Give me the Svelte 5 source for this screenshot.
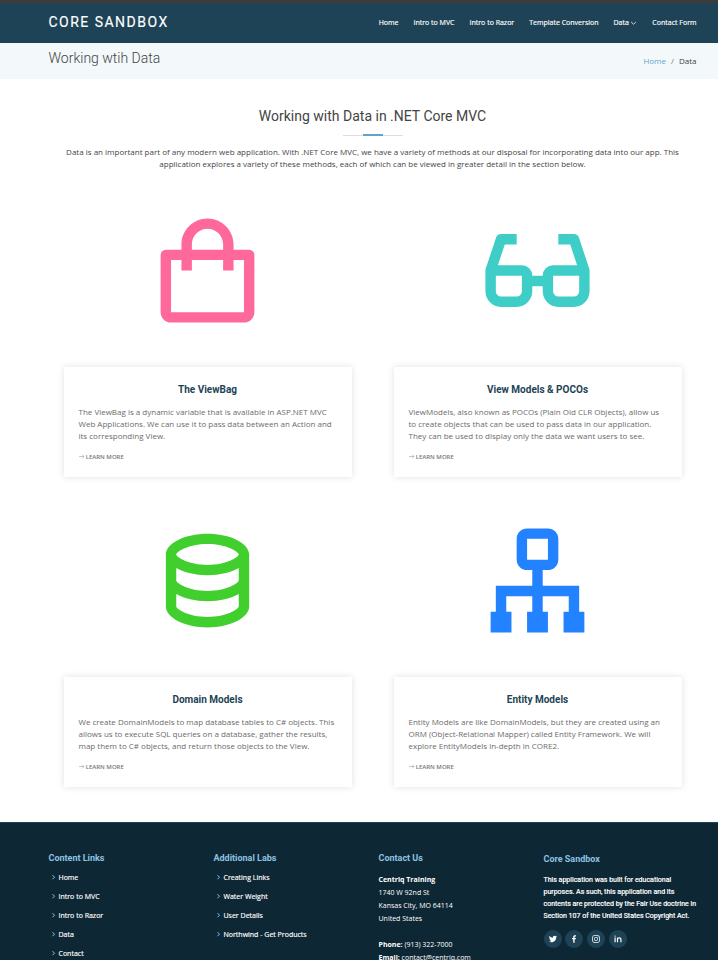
<script>
  const nav = ['Home', 'Intro to MVC', 'Intro to Razor', 'Template Conversion', 'Data', 'Contact Form'];

  const cards = [
    {
      title: 'The ViewBag',
      color: '#ff689b',
      lines: ['The ViewBag is a dynamic variable that is available in ASP.NET MVC', 'Web Applications. We can use it to pass data between an Action and', 'its corresponding View.'],
      icon: 'M5 22h14c1.103 0 2-.897 2-2V9a1 1 0 0 0-1-1h-3V7c0-2.757-2.243-5-5-5S7 4.243 7 7v1H4a1 1 0 0 0-1 1v11c0 1.103.897 2 2 2zM9 7c0-1.654 1.346-3 3-3s3 1.346 3 3v1H9V7zm-4 3h2v2h2v-2h6v2h2v-2h2v10H5V10z'
    },
    {
      title: 'View Models & POCOs',
      color: '#3fcdc7',
      lines: ['ViewModels, also known as POCOs (Plain Old CLR Objects), allow us', 'to create objects that can be used to pass data in our application.', 'They can be used to display only the data we want users to see.'],
      icon: 'M8 5H5a1 1 0 0 0-.95.68L2.050 11.680A1 1 0 0 0 2 12v4c0 1.654 1.346 3 3 3h3c1.654 0 3-1.346 3-3v-1h2v1c0 1.654 1.346 3 3 3h3c1.654 0 3-1.346 3-3v-4a1 1 0 0 0-.05-.32l-2-6A1 1 0 0 0 19 5h-3v2h2.280l1.330 4H15a2 2 0 0 0-2 2h-2a2 2 0 0 0-2-2H4.390l1.330-4H8V5zM4 13h5v3a1 1 0 0 1-1 1H5a1 1 0 0 1-1-1v-3zm11 0h5v3a1 1 0 0 1-1 1h-3a1 1 0 0 1-1-1v-3z'
    },
    {
      title: 'Domain Models',
      color: '#41cf2e',
      lines: ['We create DomainModels to map database tables to C# objects. This', 'allows us to execute SQL queries on a database, gather the results,', 'map them to C# objects, and return those objects to the View.'],
      icon: 'M20 17V7c0-2.168-3.663-4-8-4S4 4.832 4 7v10c0 2.168 3.663 4 8 4s8-1.832 8-4zM12 5c3.691 0 5.931 1.507 6 1.994C17.931 7.493 15.691 9 12 9S6.069 7.493 6 7.006C6.069 6.507 8.309 5 12 5zM6 9.607C7.479 10.454 9.637 11 12 11s4.521-.546 6-1.393v2.387c-.069.499-2.309 2.006-6 2.006s-5.931-1.507-6-2V9.607zM6 17v-2.393C7.479 15.454 9.637 16 12 16s4.521-.546 6-1.393v2.387c-.069.499-2.309 2.006-6 2.006s-5.931-1.507-6-2z'
    },
    {
      title: 'Entity Models',
      color: '#2282ff',
      lines: ['Entity Models are like DomainModels, but they are created using an', 'ORM (Object-Relational Mapper) called Entity Framework. We will', 'explore EntityModels in-depth in CORE2.'],
      icon: 'M19 13h-6v-3h1c1.103 0 2-.897 2-2V4c0-1.103-.897-2-2-2h-4c-1.103 0-2 .897-2 2v4c0 1.103.897 2 2 2h1v3H4v5H3v4h4v-4H6v-3h5v3h-1v4h4v-4h-1v-3h5v3h-1v4h4v-4h-1v-5h-1zM10 4h4v4h-4V4z'
    }
  ];

  const footerLinks = [
    { title: 'Content Links', links: ['Home', 'Intro to MVC', 'Intro to Razor', 'Data', 'Contact'] },
    { title: 'Additional Labs', links: ['Creating Links', 'Water Weight', 'User Details', 'Northwind - Get Products'] }
  ];

  const about = ['This application was built for educational', 'purposes. As such, this application and its', 'contents are protected by the Fair Use doctrine in', 'Section 107 of the United States Copyright Act.'];

  const socials = [
    { name: 'Twitter', d: 'M19.633 7.997c.013.175.013.349.013.523 0 5.325-4.053 11.461-11.46 11.461-2.282 0-4.402-.661-6.186-1.809.324.037.636.05.973.05a8.07 8.07 0 0 0 5.001-1.721 4.036 4.036 0 0 1-3.767-2.793c.249.037.499.062.761.062.361 0 .724-.05 1.061-.137a4.027 4.027 0 0 1-3.230-3.953v-.05c.537.299 1.160.486 1.820.511a4.022 4.022 0 0 1-1.796-3.354c0-.748.199-1.434.548-2.032a11.457 11.457 0 0 0 8.306 4.215c-.062-.3-.1-.611-.1-.923a4.026 4.026 0 0 1 4.028-4.028c1.160 0 2.207.486 2.943 1.272a7.957 7.957 0 0 0 2.556-.973 4.020 4.020 0 0 1-1.771 2.220 8.073 8.073 0 0 0 2.319-.624 8.645 8.645 0 0 1-2.019 2.083z' },
    { name: 'Facebook', d: 'M13.397 20.997v-8.196h2.765l.411-3.209h-3.176V7.548c0-.926.258-1.56 1.587-1.56h1.684V3.127A22.336 22.336 0 0 0 14.201 3c-2.444 0-4.122 1.492-4.122 4.231v2.355H7.332v3.209h2.753v8.202h3.312z' },
    { name: 'Instagram', d: 'M8 3h8a5 5 0 0 1 5 5v8a5 5 0 0 1-5 5H8a5 5 0 0 1-5-5V8a5 5 0 0 1 5-5zm0 1.8A3.2 3.2 0 0 0 4.8 8v8A3.2 3.2 0 0 0 8 19.2h8a3.2 3.2 0 0 0 3.2-3.2V8A3.2 3.2 0 0 0 16 4.8H8zM12 7.4a4.6 4.6 0 1 1 0 9.2 4.6 4.6 0 0 1 0-9.2zm0 1.7a2.9 2.9 0 1 0 0 5.8 2.9 2.9 0 0 0 0-5.8zM16.8 6.1a1.1 1.1 0 1 1 0 2.2 1.1 1.1 0 0 1 0-2.2z' },
    { name: 'LinkedIn', d: 'M4.983 3.321a1.688 1.688 0 1 1 0 3.376 1.688 1.688 0 0 1 0-3.376zM3.600 8.300h2.800V20H3.600zM9.351 8.300h2.700v1.300c.6-1 1.600-1.600 3-1.600 3.300 0 5.400 1.700 5.400 5.600V20h-2.900v-6c0-2.300-.9-3.300-2.500-3.300-1.800 0-2.800 1.200-2.800 3.300v6h-2.900z' }
  ];
</script>

<div class="page">
  <header>
    <div class="container bar">
      <div class="brand">CORE SANDBOX</div>
      <nav>
        {#each nav as item}
          <a href="#top">{item}{#if item === 'Data'}<svg class="caret" viewBox="0 0 8 8"><path d="M1.300 2.200 4 4.900 6.700 2.200" /></svg>{/if}</a>
        {/each}
      </nav>
    </div>
  </header>

  <section class="crumbs">
    <div class="container bar">
      <h1>Working wtih Data</h1>
      <div class="trail"><a href="#top">Home</a><span class="slash">/</span><span>Data</span></div>
    </div>
  </section>

  <main class="container">
    <div class="intro">
      <h2>Working with Data in .NET Core MVC</h2>
      <div class="rule"><i></i></div>
      <p>Data is an important part of any modern web application. With .NET Core MVC, we have a variety of methods at our disposal for incorporating data into our app. This<br />application explores a variety of these methods, each of which can be viewed in greater detail in the section below.</p>
    </div>
    <div class="grid">
      {#each cards as card}
        <article>
          <svg class="big" viewBox="0 0 24 24" fill={card.color} fill-rule="evenodd"><path d={card.icon} /></svg>
          <div class="card">
            <h4>{card.title}</h4>
            <p>{#each card.lines as line}<span>{line}</span>{/each}</p>
            <a class="more" href="#top"><svg viewBox="0 0 8 6"><path d="M.2 2.500h5M3.700.7 5.500 2.500 3.700 4.300" /></svg>LEARN MORE</a>
          </div>
        </article>
      {/each}
    </div>
  </main>

  <footer>
    <div class="container cols">
      {#each footerLinks as col}
        <div class="col">
          <h5>{col.title}</h5>
          <ul>
            {#each col.links as link}
              <li><svg viewBox="0 0 9 9"><path d="M3.500 2.200 5.500 4.200 3.500 6.200" /></svg><a href="#top">{link}</a></li>
            {/each}
          </ul>
        </div>
      {/each}
      <div class="col contact">
        <h5>Contact Us</h5>
        <p><b>Centriq Training</b><br />1740 W 92nd St<br />Kansas City, MO 64114<br />United States<br /><br /><b>Phone:</b> (913) 322-7000<br /><b>Email:</b> contact@centriq.com</p>
      </div>
      <div class="col about">
        <h5>Core Sandbox</h5>
        <p>{#each about as line}<span>{line}</span>{/each}</p>
        <div class="social">
          {#each socials as s}
            <a href="#top" aria-label={s.name}><svg viewBox="0 0 24 24" fill-rule="evenodd"><path d={s.d} /></svg></a>
          {/each}
        </div>
      </div>
    </div>
  </footer>
</div>

<style>
  :global(body) { overflow: hidden; background: #fff; }
  :global(#app) { height: 960px; overflow: hidden; }
  * { box-sizing: border-box; }
  h1, h2, h4, h5, p, ul { margin: 0; padding: 0; }
  a { color: inherit; text-decoration: none; }
  .page { width: 745px; height: 960px; overflow: hidden; color: #444; font: 8px/12px "Open Sans", sans-serif; display: flex; flex-direction: column; }
  .container { width: 660px; margin: 0 auto; padding: 0 6px; }
  .bar { display: flex; justify-content: space-between; }
  header { height: 43px; flex: none; background: #1e4356; border-top: 3px solid #3d3c3a; color: #fff; }
  header .bar { height: 40px; align-items: center; }
  .brand { font: 400 14px/18px Roboto, sans-serif; letter-spacing: 1.480px; -webkit-text-stroke: .15px #fff; margin-top: -2px; }
  nav { display: flex; gap: 15px; font-size: 7px; line-height: 12px; font-weight: 400; -webkit-text-stroke: .15px #fff; white-space: nowrap; margin-top: -1px; }
  .caret { width: 7px; height: 7px; margin-left: 1.500px; vertical-align: -2px; fill: none; stroke: #fff; stroke-width: .9; }
  .crumbs { height: 36px; flex: none; background: #f3f8fb; }
  h1 { font: 300 14px/18px Roboto, sans-serif; margin-top: 6px; }
  .trail { margin-top: 12px; }
  .trail a { color: #5fa5cb; }
  .slash { color: #6c757d; padding: 0 5px; }
  main { flex: none; height: 743px; }
  .intro { text-align: center; padding-top: 28px; }
  h2 { font: 400 14px/18px Roboto, sans-serif; }
  .rule { width: 60px; height: 3px; margin: 9px auto 9px; display: flex; justify-content: center; background: linear-gradient(#ddd, #ddd) 0 1px / 100% 1px no-repeat; }
  .rule i { width: 20px; height: 2px; background: #5fa5cb; }
  .intro p { white-space: nowrap; }
  .grid { display: grid; grid-template-columns: 330px 330px; margin: 37.600px -6px 0; }
  article { height: 310px; display: flex; flex-direction: column; align-items: center; }
  .big { width: 125px; height: 125px; display: block; margin-bottom: 34.400px; flex: none; }
  .card { width: 288px; height: 110px; padding: 15px; background: #fff; box-shadow: 0 0 7px rgba(0, 0, 0, .12); }
  h4 { font: 700 10px/15px Roboto, sans-serif; color: #1e4356; text-align: center; }
  .card p { margin-top: 9px; color: #6b6b6b; }
  .card p span, .about p span { display: block; white-space: nowrap; }
  .more { display: flex; align-items: center; margin-top: 9px; font-size: 6px; line-height: 12px; font-weight: 600; color: #777; }
  .more svg { width: 7.200px; height: 6px; fill: none; stroke: #777; stroke-width: .5; }
  footer { flex: 1; background: #0e2735; border-top: 1px solid #17475f; color: #fff; }
  .cols { display: grid; grid-template-columns: repeat(4, 165px); padding-top: 29px; }
  h5 { font: 700 9px/12px Roboto, sans-serif; color: #8dc2e0; }
  ul { list-style: none; margin-top: 7px; }
  li { height: 19px; display: flex; align-items: center; font-size: 7px; -webkit-text-stroke: .15px #fff; padding-bottom: 6px; }
  li svg { width: 9px; height: 9px; margin-right: 1px; fill: none; stroke: #8dc2e0; stroke-width: 1; }
  .contact p { font-size: 7px; line-height: 13px; margin-top: 9px; white-space: nowrap; }
  .about { padding-top: 1px; }
  .about p { font: 400 7px/12px Roboto, sans-serif; -webkit-text-stroke: .2px #fff; margin-top: 9px; }
  .social { display: flex; gap: 3.800px; margin-top: 8px; }
  .social a { width: 18px; height: 18px; border-radius: 50%; background: #1e4356; display: grid; place-items: center; }
  .social svg { width: 10px; height: 10px; margin-top: -1px; fill: #fff; }
</style>
